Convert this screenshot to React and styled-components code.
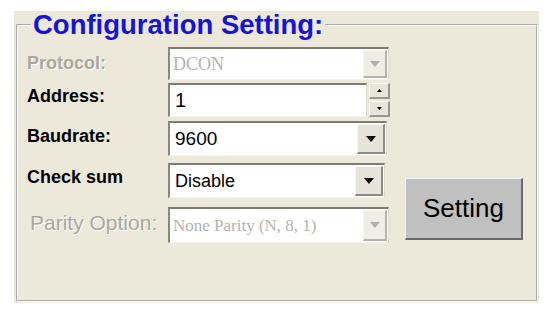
import React from 'react';
import styled, { createGlobalStyle } from 'styled-components';

const GlobalStyle = createGlobalStyle`
  body {
    margin: 0;
    background: #ffffff;
    font-family: "Liberation Sans", Arial, sans-serif;
  }
`;

const Page = styled.div`
  padding: 11px 0 0 14px;
`;

const Panel = styled.div`
  width: 525px;
  height: 292px;
  box-sizing: border-box;
  padding: 0 0 0 2px;
  background: #ece9db;
`;

const Group = styled.fieldset`
  margin: 0;
  width: 522px;
  height: 291px;
  box-sizing: border-box;
  border: 2px groove #ffffff;
  padding: 8px 0 0 9px;
`;

const Title = styled.legend`
  margin-left: 4px;
  padding: 0 2px;
  font-size: 27.5px;
  line-height: 28px;
  font-weight: bold;
  color: #1414d8;
`;

const Form = styled.div`
  display: flex;
  align-items: flex-start;
`;

const Fields = styled.div`
  display: flex;
  flex-direction: column;
`;

const Row = styled.div`
  display: grid;
  grid-template-columns: 141px auto;
  align-items: center;
  height: ${p => p.$h}px;
  margin-top: ${p => p.$gap || 0}px;
`;

const Label = styled.span`
  font-size: ${p => (p.$large ? 21 : 18)}px;
  font-weight: ${p => (p.$large ? 'normal' : 'bold')};
  color: ${p => (p.$disabled ? '#a9a89c' : '#000000')};
  text-shadow: ${p => (p.$disabled ? '1px 1px 0 #ffffff' : 'none')};
  padding-left: ${p => (p.$large ? 3 : 0)}px;
  margin-bottom: ${p => p.$lift ?? 5}px;
  white-space: nowrap;
`;

const Combo = styled.div`
  display: flex;
  width: ${p => p.$w}px;
  height: 100%;
  box-sizing: border-box;
  border-top: 2px solid #7c7b74;
  border-left: 2px solid #8a8980;
  border-right: 1px solid #dcdad0;
  border-bottom: 1px solid #f4f3ee;
  background: #ffffff;
`;

const Value = styled.div`
  flex: 1;
  display: flex;
  align-items: center;
  padding-left: ${p => (p.$serif ? 3 : 5)}px;
  font-family: ${p => (p.$serif ? '"Liberation Serif", "Times New Roman", serif' : '"Liberation Sans", Arial, sans-serif')};
  font-size: ${p => p.$size || 18}px;
  color: ${p => (p.$disabled ? '#b4b4b0' : '#000000')};
  white-space: nowrap;
  overflow: hidden;
`;

const DropButton = styled.div`
  width: ${p => p.$w || 26}px;
  margin: 1px 1px 1px 0;
  box-sizing: border-box;
  display: flex;
  align-items: center;
  justify-content: center;
  background: ${p => (p.$disabled ? '#efede4' : '#e6e3d8')};
  border-top: 1px solid #f8f7f2;
  border-left: 1px solid #f8f7f2;
  border-right: 2px solid ${p => (p.$disabled ? '#b6b4aa' : '#8e8c82')};
  border-bottom: 2px solid ${p => (p.$disabled ? '#b6b4aa' : '#8e8c82')};
`;

const TextBox = styled(Combo)`
  width: 199px;
`;

const SpinGroup = styled.div`
  display: flex;
  flex-direction: column;
  justify-content: space-between;
  margin-left: 2px;
  width: 21px;
  height: 100%;
`;

const SpinButton = styled.div`
  height: 16px;
  box-sizing: border-box;
  display: flex;
  align-items: center;
  justify-content: center;
  background: #e8e6dc;
  border-top: 1px solid #fbfaf6;
  border-left: 1px solid #fbfaf6;
  border-right: 2px solid #9a988e;
  border-bottom: 2px solid #9a988e;
`;

const AddressField = styled.div`
  display: flex;
  height: 100%;
`;

const Side = styled.div`
  margin: 131px 0 0 15px;
`;

const Button = styled.div`
  width: 118px;
  height: 62px;
  box-sizing: border-box;
  display: flex;
  align-items: center;
  justify-content: center;
  background: #c0c0c0;
  border-top: 1px solid #f2f2f2;
  border-left: 1px solid #f2f2f2;
  border-right: 2px solid #6a6a6a;
  border-bottom: 2px solid #6a6a6a;
  font-size: 26px;
  color: #000000;
`;

const Triangle = ({ color, w = 10, h = 6, up = false }) => (
  <svg width={w} height={h} viewBox={`0 0 ${w} ${h}`}>
    <polygon
      points={up ? `0,${h} ${w},${h} ${w / 2},0` : `0,0 ${w},0 ${w / 2},${h}`}
      fill={color}
    />
  </svg>
);

const App = () => (
  <>
    <GlobalStyle />
    <Page>
      <Panel>
        <Group>
          <Title>Configuration Setting:</Title>
          <Form>
            <Fields>
              <Row $h={33}>
                <Label $disabled $lift={0}>Protocol:</Label>
                <Combo $w={221}>
                  <Value $serif $disabled>DCON</Value>
                  <DropButton $disabled $w={24}>
                    <Triangle color="#b0afa6" />
                  </DropButton>
                </Combo>
              </Row>
              <Row $h={34} $gap={3}>
                <Label $lift={8}>Address:</Label>
                <AddressField>
                  <TextBox>
                    <Value $size={20}>1</Value>
                  </TextBox>
                  <SpinGroup>
                    <SpinButton>
                      <Triangle color="#000000" w={5} h={3} up />
                    </SpinButton>
                    <SpinButton>
                      <Triangle color="#000000" w={5} h={3} />
                    </SpinButton>
                  </SpinGroup>
                </AddressField>
              </Row>
              <Row $h={35} $gap={4}>
                <Label>Baudrate:</Label>
                <Combo $w={219}>
                  <Value $size={19}>9600</Value>
                  <DropButton $w={28}>
                    <Triangle color="#000000" />
                  </DropButton>
                </Combo>
              </Row>
              <Row $h={35} $gap={7}>
                <Label $lift={6}>Check sum</Label>
                <Combo $w={217}>
                  <Value>Disable</Value>
                  <DropButton $w={28}>
                    <Triangle color="#000000" />
                  </DropButton>
                </Combo>
              </Row>
              <Row $h={36} $gap={9}>
                <Label $disabled $large>Parity Option:</Label>
                <Combo $w={221}>
                  <Value $serif $disabled $size={17}>None Parity (N, 8, 1)</Value>
                  <DropButton $disabled $w={24}>
                    <Triangle color="#b0afa6" />
                  </DropButton>
                </Combo>
              </Row>
            </Fields>
            <Side>
              <Button>Setting</Button>
            </Side>
          </Form>
        </Group>
      </Panel>
    </Page>
  </>
);

export default App;
